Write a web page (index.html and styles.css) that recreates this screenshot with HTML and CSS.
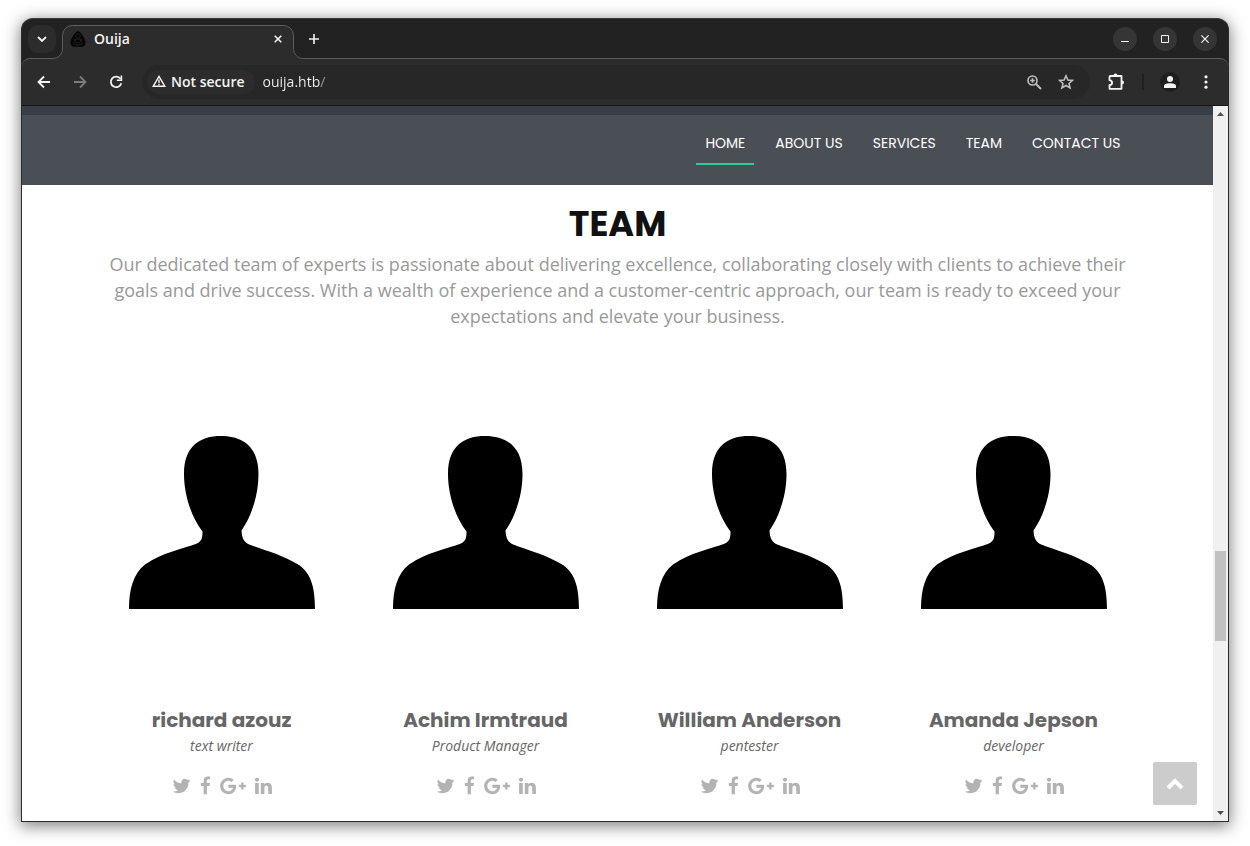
FILE: index.html
```html
<!DOCTYPE html>
<html lang="en">
<head>
<meta charset="utf-8">
<title>Ouija</title>
<link rel="stylesheet" href="styles.css">
</head>
<body>
<svg class="sprite" aria-hidden="true">
  <symbol id="person" viewBox="0 0 186 173"><path d="M92 0C113 0 129.500 10 129.500 38C129.500 60 122 81 112.500 94.500C113 101 114 105 119 108C134 114 152 118 170 129C183 138 186 154 186 173H0C0 154 4 138 16 128.500C34 116 54 113 68 107.500C73 105 73.500 101 73.500 95.500C63 82 55 60 55 38C55 10 71 0 92 0Z"/></symbol>
  <symbol id="twitter" viewBox="64 0 1664 1792"><path d="M1684 408q-67 98-162 167 1 14 1 42 0 130-38 259.500t-115.500 248.500-184.500 210.500-258 146-323 54.500q-271 0-496-145 35 4 78 4 225 0 401-138-105-2-188-64.500t-114-159.500q33 5 61 5 43 0 85-11-112-23-185.500-111.500t-73.500-205.500v-4q68 38 146 41-66-44-105-115t-39-154q0-88 44-163 121 149 294.500 238.500t371.500 99.500q-8-38-8-74 0-134 94.500-228.500t228.500-94.500q140 0 236 102 109-21 205-78-37 115-142 178 93-10 186-50z"/></symbol>
  <symbol id="facebook" viewBox="399 0 1024 1792"><path d="M1343 12v264h-157q-86 0-116 36t-30 108v189h293l-39 296h-254v759h-306v-759h-255v-296h255v-218q0-186 104-288.500t277-102.500q147 0 228 12z"/></symbol>
  <symbol id="gplus" viewBox="0 -1536 2304 1792"><path transform="scale(1 -1)" d="M1437 623q0 -208 -87 -370.500t-248 -254t-369 -91.500q-149 0 -285 58t-234 156t-156 234t-58 285t58 285t156 234t234 156t285 58q286 0 491 -192l-199 -191q-117 113 -292 113q-123 0 -227.500 -62t-165.500 -168.500t-61 -232.500t61 -232.500t165.500 -168.500t227.500 -62q83 0 152.500 23t114.500 57.500t78.500 78.500t49 83t21.500 74h-416v252h692q12 -63 12 -122zM2304 745v-210h-209v-209h-210v209h-209v210h209v209h210v-209h209z"/></symbol>
  <symbol id="linkedin" viewBox="137 0 1536 1792"><path d="M477 625v991h-330v-991h330zm21-306q1 73-50.500 122t-135.500 49h-2q-82 0-132-49t-50-122q0-74 51.500-122.500t134.500-48.500h2q83 0 133 48.500t51 122.500zm1166 729v568h-329v-530q0-105-40.500-164.500t-126.500-59.500q-63 0-105.500 34.500t-63.500 85.500q-11 30-11 81v553h-329q2-399 2-647t-1-296l-1-48h329v144h-2q20-32 41-56t56.500-52 87-43.500 114.500-15.500q171 0 275 113.500t104 332.500z"/></symbol>
</svg>

<div class="window">
  <header class="tabstrip">
    <button class="tab-search" aria-label="Search tabs"><svg width="10" height="6" viewBox="0 0 10 6"><path d="M1 1l4 4 4-4" fill="none" stroke="currentColor" stroke-width="1.800"/></svg></button>
    <div class="tab">
      <svg class="tab-shape" width="252" height="34" viewBox="0 0 252 34" aria-hidden="true"><path d="M0 33.500C7 33.500 10.500 29 10.500 23V10.500A10 10 0 0 1 20.500 .5H231.500A10 10 0 0 1 241.500 10.500V23C241.500 29 245 33.500 252 33.500V35H0Z" fill="#2c2c2c"/><path d="M0 33.500C7 33.500 10.500 29 10.500 23V10.500A10 10 0 0 1 20.500 .5H231.500A10 10 0 0 1 241.500 10.500V23C241.500 29 245 33.500 252 33.500" fill="none" stroke="#5e5e5e"/></svg>
      <svg class="favicon" width="16" height="16" viewBox="0 0 16 16" aria-hidden="true"><path d="M8 0C10.500 .5 15.500 7.500 15.500 11.500C15.500 14 14 15.800 12 15.800H4C2 15.800 .5 14 .5 11.500C.5 7.500 5.500 .5 8 0Z" fill="#050505"/><g fill="none" stroke="#262626" stroke-width=".8"><circle cx="8" cy="5" r="2.300"/><ellipse cx="8" cy="10" rx="3.500" ry="2"/><path d="M3 12q5 4 10 0M4 8l2 2M12 8l-2 2"/></g></svg>
      <span class="tab-title">Ouija</span>
      <button class="tab-close" aria-label="Close tab"><svg width="8" height="8" viewBox="0 0 8 8"><path d="M.7 .7l6.600 6.600M7.300 .7L.7 7.300" fill="none" stroke="currentColor" stroke-width="1.600"/></svg></button>
    </div>
    <button class="new-tab" aria-label="New tab"><svg width="10" height="10" viewBox="0 0 10 10"><path d="M5 0v10M0 5h10" stroke="currentColor" stroke-width="1.600"/></svg></button>
    <div class="controls">
      <button aria-label="Minimize"><svg width="8" height="8" viewBox="0 0 8 8"><path d="M0 6.500h8" stroke="currentColor"/></svg></button>
      <button aria-label="Maximize"><svg width="8" height="8" viewBox="0 0 8 8"><path d="M.5 .5h7v7h-7z" fill="none" stroke="currentColor"/></svg></button>
      <button aria-label="Close"><svg width="8" height="8" viewBox="0 0 8 8"><path d="M.4 .4l7.200 7.200M7.600 .4L.4 7.600" stroke="currentColor" stroke-width="1.200"/></svg></button>
    </div>
  </header>

  <div class="toolbar">
    <button class="tool" aria-label="Back"><svg width="14" height="14" viewBox="0 0 14 14"><path d="M13 7H2M7 1.500L1.500 7L7 12.500" fill="none" stroke="currentColor" stroke-width="1.800"/></svg></button>
    <button class="tool tool-off" aria-label="Forward" disabled><svg width="14" height="14" viewBox="0 0 14 14"><path d="M1 7h11M7 1.500L12.500 7L7 12.500" fill="none" stroke="currentColor" stroke-width="1.800"/></svg></button>
    <button class="tool" aria-label="Reload"><svg width="14" height="14" viewBox="0 0 14 14"><path d="M11.500 3.800A5.300 5.300 0 1 0 12.300 8.200" fill="none" stroke="currentColor" stroke-width="1.800"/><path d="M13.200 .6V6H7.800V4.400H11.600V.6Z" fill="currentColor"/></svg></button>
    <div class="omnibox">
      <button class="chip"><svg width="14" height="12" viewBox="0 0 14 12" aria-hidden="true"><path d="M7 1.400L12.800 11.300H1.200Z" fill="none" stroke="currentColor" stroke-width="1.400"/><path d="M7 4.500v3.500M7 8.800v1.400" stroke="currentColor" stroke-width="1.400"/></svg>Not secure</button>
      <input class="url" type="text" value="ouija.htb/" aria-label="Address">
      <button class="tool tool-dim" aria-label="Zoom"><svg width="15" height="15" viewBox="0 0 15 15"><circle cx="5.500" cy="5.500" r="4.500" fill="none" stroke="currentColor" stroke-width="1.600"/><path d="M5.500 3.200v4.600M3.200 5.500h4.600" stroke="currentColor" stroke-width="1.600"/><path d="M9 9l5 5" stroke="currentColor" stroke-width="2"/></svg></button>
      <button class="tool tool-dim" aria-label="Bookmark"><svg width="16" height="16" viewBox="0 0 16 16"><path d="M8 1.700L9.900 6L14.500 6.400L11 9.400L12.100 14L8 11.500L3.900 14L5 9.400L1.500 6.400L6.100 6Z" fill="none" stroke="currentColor" stroke-width="1.500"/></svg></button>
    </div>
    <button class="tool" aria-label="Extensions"><svg width="18" height="18" viewBox="0 0 18 18"><path d="M3.500 3H14.500V15.800H2.500V12.200C6 11.500 6 8 2.500 7.200V4Q2.500 3 3.500 3Z" fill="none" stroke="currentColor" stroke-width="1.800" stroke-linejoin="round"/><path d="M6.500 2.500a2 2 0 0 1 4 0ZM15 7.500a2 2 0 0 1 0 4Z" fill="currentColor"/></svg></button>
    <span class="divider"></span>
    <button class="profile" aria-label="Profile"><svg width="12" height="12" viewBox="0 0 12 12"><circle cx="6" cy="3" r="3" fill="currentColor"/><path d="M0 12V10C0 8 3 7.200 6 7.200S12 8 12 10V12Z" fill="currentColor"/></svg></button>
    <button class="tool" aria-label="Menu"><svg width="4" height="14" viewBox="0 0 4 14"><g fill="currentColor"><circle cx="2" cy="1.800" r="1.600"/><circle cx="2" cy="7" r="1.600"/><circle cx="2" cy="12.200" r="1.600"/></g></svg></button>
  </div>

  <div class="viewport">
    <div class="page">
      <div class="topbar"></div>
      <div class="site-header">
        <nav class="container nav">
          <a class="active" href="#home">HOME</a>
          <a href="#about">ABOUT US</a>
          <a href="#services">SERVICES</a>
          <a href="#team">TEAM</a>
          <a href="#contact">CONTACT US</a>
        </nav>
      </div>
      <main class="container team" id="team">
        <h2>TEAM</h2>
        <p class="intro">Our dedicated team of experts is passionate about delivering excellence, collaborating closely with clients to achieve their goals and drive success. With a wealth of experience and a customer-centric approach, our team is ready to exceed your expectations and elevate your business.</p>
        <div class="members">
          <article class="member">
            <svg class="photo" role="img" aria-label="richard azouz"><use href="#person"/></svg>
            <h3>richard azouz</h3>
            <p class="role">text writer</p>
            <div class="social">
              <a href="#tw" aria-label="Twitter"><svg width="19" height="20"><use href="#twitter"/></svg></a>
              <a href="#fb" aria-label="Facebook"><svg width="11" height="20"><use href="#facebook"/></svg></a>
              <a href="#gp" aria-label="Google Plus"><svg width="26" height="20"><use href="#gplus"/></svg></a>
              <a href="#in" aria-label="LinkedIn"><svg width="17" height="20"><use href="#linkedin"/></svg></a>
            </div>
          </article>
          <article class="member">
            <svg class="photo" role="img" aria-label="Achim Irmtraud"><use href="#person"/></svg>
            <h3>Achim Irmtraud</h3>
            <p class="role">Product Manager</p>
            <div class="social">
              <a href="#tw" aria-label="Twitter"><svg width="19" height="20"><use href="#twitter"/></svg></a>
              <a href="#fb" aria-label="Facebook"><svg width="11" height="20"><use href="#facebook"/></svg></a>
              <a href="#gp" aria-label="Google Plus"><svg width="26" height="20"><use href="#gplus"/></svg></a>
              <a href="#in" aria-label="LinkedIn"><svg width="17" height="20"><use href="#linkedin"/></svg></a>
            </div>
          </article>
          <article class="member">
            <svg class="photo" role="img" aria-label="William Anderson"><use href="#person"/></svg>
            <h3>William Anderson</h3>
            <p class="role">pentester</p>
            <div class="social">
              <a href="#tw" aria-label="Twitter"><svg width="19" height="20"><use href="#twitter"/></svg></a>
              <a href="#fb" aria-label="Facebook"><svg width="11" height="20"><use href="#facebook"/></svg></a>
              <a href="#gp" aria-label="Google Plus"><svg width="26" height="20"><use href="#gplus"/></svg></a>
              <a href="#in" aria-label="LinkedIn"><svg width="17" height="20"><use href="#linkedin"/></svg></a>
            </div>
          </article>
          <article class="member">
            <svg class="photo" role="img" aria-label="Amanda Jepson"><use href="#person"/></svg>
            <h3>Amanda Jepson</h3>
            <p class="role">developer</p>
            <div class="social">
              <a href="#tw" aria-label="Twitter"><svg width="19" height="20"><use href="#twitter"/></svg></a>
              <a href="#fb" aria-label="Facebook"><svg width="11" height="20"><use href="#facebook"/></svg></a>
              <a href="#gp" aria-label="Google Plus"><svg width="26" height="20"><use href="#gplus"/></svg></a>
              <a href="#in" aria-label="LinkedIn"><svg width="17" height="20"><use href="#linkedin"/></svg></a>
            </div>
          </article>
        </div>
      </main>
      <a class="to-top" href="#home" aria-label="Back to top"><svg width="18" height="12" viewBox="0 0 18 12"><path d="M2 10l7-7 7 7" fill="none" stroke="currentColor" stroke-width="4"/></svg></a>
    </div>
    <div class="scrollbar" aria-hidden="true">
      <svg width="15" height="16" viewBox="0 0 15 16"><path d="M4 10L7.500 6L11 10Z" fill="#505050"/></svg>
      <span class="before"></span>
      <span class="thumb"></span>
      <span class="after"></span>
      <svg width="15" height="16" viewBox="0 0 15 16"><path d="M4 6L7.500 10L11 6Z" fill="#505050"/></svg>
    </div>
  </div>
</div>
</body>
</html>
```
FILE: styles.css
```css
* { box-sizing: border-box; }

body {
  margin: 0;
  min-height: 100vh;
  padding: 18px 21px 24px;
  display: flex;
  background: #fff;
  font-family: "Open Sans", "Noto Sans", sans-serif;
}

button {
  border: 0;
  padding: 0;
  background: none;
  color: inherit;
  font: inherit;
  display: flex;
  align-items: center;
  justify-content: center;
}

svg { display: block; }
.sprite { position: absolute; width: 0; height: 0; }

.window {
  flex: 1;
  min-width: 0;
  display: flex;
  flex-direction: column;
  border: 1px solid #2b2b2b;
  border-top-color: #3a3a3a;
  border-radius: 12px 12px 0 0;
  background: #222;
  color: #f4f4f4;
  box-shadow: 0 3px 16px 1px rgba(0, 0, 0, .5);
}

/* Tab strip */
.tabstrip {
  height: 39px;
  padding: 6px 11px 0 6px;
  display: flex;
  align-items: flex-start;
}
.tab-search {
  width: 28px;
  height: 28px;
  margin-right: 6px;
  border-radius: 10px;
  background: #2c2c2c;
}
.tab {
  position: relative;
  z-index: 1;
  width: 232px;
  height: 28px;
  padding: 0 8px;
  display: flex;
  align-items: center;
  gap: 8px;
}
.tab-shape { position: absolute; left: -10px; top: 0; }
.favicon, .tab-title, .tab-close { position: relative; }
.tab-title { flex: 1; font-size: 14px; font-weight: 600; line-height: 20px; }
.tab-close { width: 16px; height: 16px; }
.new-tab { width: 28px; height: 28px; margin-left: 6px; }
.controls { margin-left: auto; display: flex; gap: 16px; padding-top: 2px; }
.controls button { width: 24px; height: 24px; border-radius: 50%; background: #353535; }

/* Toolbar */
.toolbar {
  height: 48px;
  padding: 0 8px;
  display: flex;
  align-items: center;
  gap: 8px;
  border-top: 1px solid #5e5e5e;
  border-bottom: 1px solid #161616;
  border-radius: 8px 8px 0 0;
  background: #2c2c2c;
}
.tool { width: 28px; height: 28px; flex: none; }
.tool-off { color: #7c7c7c; }
.tool-dim { color: #c0c0c0; }
.omnibox {
  flex: 1;
  min-width: 0;
  height: 34px;
  margin: 0 4px;
  padding: 0 10px 0 5px;
  display: flex;
  align-items: center;
  gap: 4px;
  border-radius: 17px;
  background: #272727;
}
.chip {
  height: 24px;
  padding: 0 10px 2px 5px;
  gap: 5px;
  border-radius: 12px;
  background: #2c2c2c;
  font-size: 14px;
  font-weight: 600;
  white-space: nowrap;
}
.url {
  flex: 1;
  min-width: 0;
  height: 24px;
  padding: 0 4px 2px;
  border: 0;
  outline: 0;
  background: linear-gradient(90deg, #f4f4f4 61px, #999 61px);
  background-clip: text;
  -webkit-background-clip: text;
  color: transparent;
  caret-color: #f4f4f4;
  font: 14px/20px "Open Sans", "Noto Sans", sans-serif;
}
.divider { width: 2px; height: 16px; margin: 0 4px; background: #202020; }
.profile { width: 20px; height: 20px; margin: 0 4px; border-radius: 50%; background: #1d1f1f; }

/* Page area */
.viewport { flex: 1; display: flex; min-height: 0; background: #fff; }
.page { position: relative; flex: 1; min-width: 0; overflow: hidden; }
.container { width: 100%; max-width: 1088px; margin: 0 auto; padding: 0 16px; }
.topbar { height: 9px; background: #383e46; }
.site-header { height: 70px; background: #4a4e55; }
.nav {
  padding-top: 16px;
  padding-right: 32px;
  display: flex;
  justify-content: flex-end;
  gap: 12px;
}
.nav a {
  padding: 0 9px 8px;
  border-bottom: 2px solid transparent;
  color: #fff;
  font-family: Poppins, Lato, sans-serif;
  font-size: 14px;
  line-height: 24px;
  text-decoration: none;
}
.nav .active { border-bottom-color: #2dc997; }

.team { text-align: center; padding-top: 18px; }
h2 {
  margin: 0;
  color: #111;
  font-family: Poppins, Inter, sans-serif;
  font-size: 35px;
  font-weight: 700;
  line-height: 42px;
}
.intro {
  margin: 6px 0 107px;
  padding: 0 16px;
  color: #999;
  font-size: 18px;
  line-height: 26px;
}
.members { display: grid; grid-template-columns: repeat(4, 1fr); }
.member { display: flex; flex-direction: column; align-items: center; }
.photo { width: 186px; height: 173px; }
h3 {
  margin: 99px 0 0;
  color: #666;
  font-family: Poppins, Inter, sans-serif;
  font-size: 20px;
  font-weight: 700;
  line-height: 24px;
}
.role {
  margin: 4px 0 20px;
  color: #666;
  font-size: 14px;
  font-style: italic;
  line-height: 20px;
}
.social { display: flex; gap: 9px; padding-bottom: 24px; color: #b3b3b3; }
.social a { color: inherit; }
.social svg { fill: currentColor; }

.to-top {
  position: absolute;
  right: 16px;
  bottom: 16px;
  width: 44px;
  height: 43px;
  display: flex;
  align-items: center;
  justify-content: center;
  border-radius: 2px;
  background: #ccc;
  color: #fff;
}

.scrollbar { width: 15px; display: flex; flex-direction: column; background: #f0f0f0; }
.before { flex: 429; }
.thumb { flex: 90; margin: 0 2px; background: #c1c1c1; }
.after { flex: 164; }
```
